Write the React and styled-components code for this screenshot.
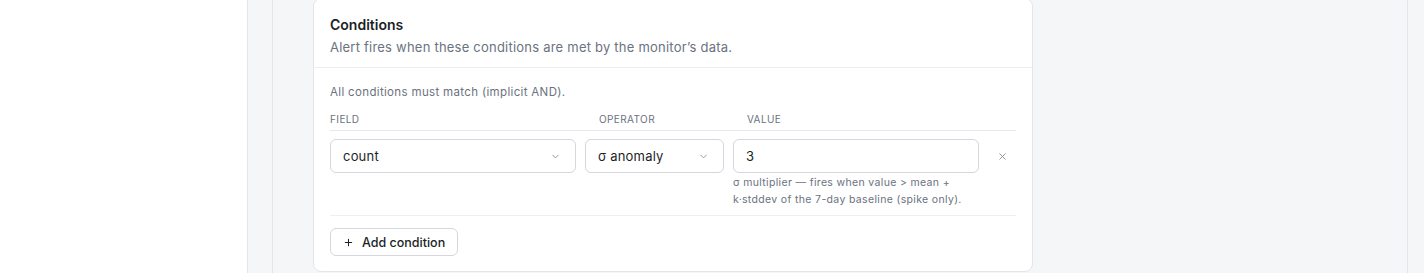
import React from 'react';
import styled, { createGlobalStyle } from 'styled-components';

const GlobalStyle = createGlobalStyle`
	html, body {
		margin: 0;
		padding: 0;
		background: #ffffff;
		font-family: Inter, "Liberation Sans", sans-serif;
	}
	* {
		box-sizing: border-box;
	}
`;

const Page = styled.div`
	display: flex;
	height: 273px;
	overflow: hidden;
`;

const SidePane = styled.div`
	width: 248px;
	flex-shrink: 0;
	background: #ffffff;
	border-right: 1px solid #e3e5e9;
`;

const Main = styled.div`
	flex: 1;
	display: flex;
	background: #f5f6f8;
	padding: 0 16px 0 24px;
`;

const Inner = styled.div`
	flex: 1;
	background: #f5f6f8;
	border-left: 1px solid #e3e5e9;
	border-right: 1px solid #e3e5e9;
	padding-left: 40px;
`;

const Card = styled.section`
	width: 720px;
	margin-top: -2px;
	background: #ffffff;
	border: 1px solid #e3e5e9;
	border-radius: 8px;
`;

const CardHeader = styled.header`
	padding: 16px 16px 10px;
	border-bottom: 1px solid #eceef1;
`;

const Title = styled.h3`
	margin: 0;
	font-size: 14px;
	line-height: 20px;
	font-weight: 600;
	color: #1b1f27;
`;

const Subtitle = styled.p`
	margin: 2px 0 0;
	font-size: 13px;
	line-height: 20px;
	letter-spacing: 0.22px;
	color: #6b7280;
`;

const CardBody = styled.div`
	padding: 16px 16px 15px;
`;

const Note = styled.p`
	margin: 0;
	font-size: 11.5px;
	line-height: 16px;
	letter-spacing: 0.34px;
	color: #6b7280;
`;

const Columns = `
	display: grid;
	grid-template-columns: 246px 139px 246px 1fr;
	column-gap: 9px;
`;

const LabelRow = styled.div`
	${Columns};
	margin-top: 12px;
	padding-bottom: 4px;
	border-bottom: 1px solid #e6e8ec;
`;

const Label = styled.span`
	font-size: 10px;
	line-height: 14px;
	letter-spacing: 0.04em;
	text-transform: uppercase;
	color: #6b7280;
	padding-left: ${({ $inset }) => ($inset ? '14px' : '0')};
`;

const ConditionRow = styled.div`
	${Columns};
	padding: 8px 0 7px;
	border-bottom: 1px solid #eceef1;
`;

const Select = styled.div`
	height: 34px;
	display: flex;
	align-items: center;
	justify-content: space-between;
	padding: 0 14px 0 12px;
	border: 1px solid #d4d7dd;
	border-radius: 6px;
	font-size: 13px;
	letter-spacing: 0.2px;
	color: #1b1f27;
	background: #ffffff;
`;

const ValueCell = styled.div`
	display: flex;
	flex-direction: column;
`;

const Input = styled.div`
	height: 34px;
	display: flex;
	align-items: center;
	padding: 0 12px;
	border: 1px solid #d4d7dd;
	border-radius: 6px;
	font-size: 13px;
	color: #1b1f27;
`;

const Hint = styled.p`
	margin: 1px 0 0;
	font-size: 10.5px;
	line-height: 17px;
	letter-spacing: 0.34px;
	color: #6b7280;
`;

const RemoveButton = styled.button`
	width: 28px;
	height: 34px;
	justify-self: end;
	display: flex;
	align-items: center;
	justify-content: center;
	border: none;
	background: none;
	padding: 0;
	color: #8b9099;
`;

const AddButton = styled.button`
	margin-top: 12px;
	height: 28px;
	display: inline-flex;
	align-items: center;
	gap: 8px;
	padding: 0 12px;
	border: 1px solid #d4d7dd;
	border-radius: 6px;
	background: #ffffff;
	font-family: inherit;
	font-size: 12.5px;
	font-weight: 500;
	color: #1b1f27;
`;

const Chevron = () => (
	<svg width="11" height="11" viewBox="0 0 24 24" fill="none" stroke="#8b9099" strokeWidth="2" strokeLinecap="round" strokeLinejoin="round">
		<path d="m6 9 6 6 6-6" />
	</svg>
);

const Cross = () => (
	<svg width="11" height="11" viewBox="0 0 24 24" fill="none" stroke="currentColor" strokeWidth="2" strokeLinecap="round">
		<path d="M18 6 6 18M6 6l12 12" />
	</svg>
);

const Plus = () => (
	<svg width="11" height="11" viewBox="0 0 24 24" fill="none" stroke="#1b1f27" strokeWidth="2.2" strokeLinecap="round">
		<path d="M12 5v14M5 12h14" />
	</svg>
);

const App = () => (
	<>
		<GlobalStyle />
		<Page>
			<SidePane />
			<Main>
				<Inner>
					<Card>
						<CardHeader>
							<Title>Conditions</Title>
							<Subtitle>Alert fires when these conditions are met by the monitor’s data.</Subtitle>
						</CardHeader>
						<CardBody>
							<Note>All conditions must match (implicit AND).</Note>
							<LabelRow>
								<Label>Field</Label>
								<Label $inset>Operator</Label>
								<Label $inset>Value</Label>
							</LabelRow>
							<ConditionRow>
								<Select>
									count
									<Chevron />
								</Select>
								<Select>
									σ anomaly
									<Chevron />
								</Select>
								<ValueCell>
									<Input>3</Input>
									<Hint>
										σ multiplier — fires when value &gt; mean +
										<br />
										k·stddev of the 7-day baseline (spike only).
									</Hint>
								</ValueCell>
								<RemoveButton aria-label="Remove condition">
									<Cross />
								</RemoveButton>
							</ConditionRow>
							<AddButton>
								<Plus />
								Add condition
							</AddButton>
						</CardBody>
					</Card>
				</Inner>
			</Main>
		</Page>
	</>
);

export default App;
